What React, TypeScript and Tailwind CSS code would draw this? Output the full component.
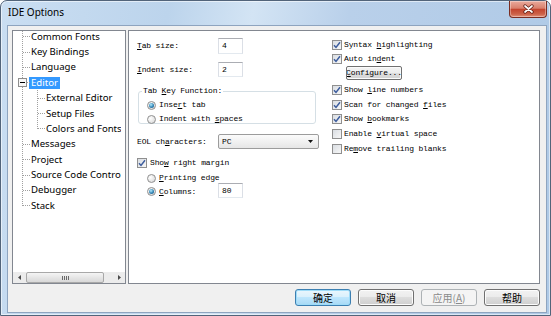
import React from "react";

const MONO = "font-['Liberation_Mono',monospace] text-[8px] leading-[10px] tracking-[-0.15px] text-black whitespace-pre";
const UI = "font-['Noto_Sans',sans-serif]";

function L({ t, u }: { t: string; u: number }) {
  return (
    <span className={`block ${MONO}`}>
      {t.slice(0, u)}
      <span className="underline decoration-1 underline-offset-[1px]">{t[u]}</span>
      {t.slice(u + 1)}
    </span>
  );
}

function Check({ on }: { on: boolean }) {
  return (
    <span className="w-[10px] h-[10px] shrink-0 border border-[#8f8f8f] bg-[linear-gradient(135deg,#d9dde2_0%,#f7f7f7_100%)] flex items-center justify-center">
      {on && (
        <svg width="8" height="8" viewBox="0 0 8 8">
          <path d="M1 4.2 L3 6.4 L7 1.2" stroke="#3d5d9e" strokeWidth="1.5" fill="none" />
        </svg>
      )}
    </span>
  );
}

function Radio({ on }: { on: boolean }) {
  return (
    <span className="w-[9px] h-[9px] shrink-0 rounded-full border border-[#8f8f8f] bg-[radial-gradient(circle_at_35%_35%,#ffffff_0%,#d4d4d4_100%)] flex items-center justify-center">
      {on && (
        <span className="w-[5px] h-[5px] rounded-full bg-[radial-gradient(circle_at_40%_35%,#b5ecff_0%,#3284b4_55%,#1b4f7a_100%)]" />
      )}
    </span>
  );
}

function Input({ v, tall }: { v: string; tall?: boolean }) {
  return (
    <div
      className={
        tall
          ? "w-[25px] h-[16px] shrink-0 border border-[#abadb3] border-b-[#e3e9ef] border-x-[#dbdfe6] bg-white flex items-center pl-[3px]"
          : "w-[25px] h-[15px] shrink-0 border border-[#abadb3] border-b-[#e3e9ef] border-x-[#dbdfe6] bg-white flex items-center pl-[3px]"
      }
    >
      <span className={MONO}>{v}</span>
    </div>
  );
}

const items: { t: string; l: number; sel?: boolean }[] = [
  { t: "Common Fonts", l: 1 },
  { t: "Key Bindings", l: 1 },
  { t: "Language", l: 1 },
  { t: "Editor", l: 1, sel: true },
  { t: "External Editor", l: 2 },
  { t: "Setup Files", l: 2 },
  { t: "Colors and Fonts", l: 2 },
  { t: "Messages", l: 1 },
  { t: "Project", l: 1 },
  { t: "Source Code Control", l: 1 },
  { t: "Debugger", l: 1 },
  { t: "Stack", l: 1 },
];

const RH = 15.38;
const cy = (i: number) => Math.floor(5.69 + RH * i) + 0.5;

function Tree() {
  const l1 = items.map((it, i) => (it.l === 1 ? i : -1)).filter((i) => i >= 0);
  const l2 = items.map((it, i) => (it.l === 2 ? i : -1)).filter((i) => i >= 0);
  return (
    <div className="w-[114px] h-[254px] shrink-0 border border-[#828790] bg-white flex flex-col">
      <div className="relative flex-1 overflow-hidden">
        <svg className="absolute left-0 top-0 pointer-events-none" width="40" height="200" shapeRendering="crispEdges">
          <line x1="9.5" y1="0" x2="9.5" y2={cy(11)} stroke="#a0a0a0" strokeDasharray="1 1" />
          {l1.map((i) => (
            <line key={i} x1="10" y1={cy(i)} x2="17" y2={cy(i)} stroke="#a0a0a0" strokeDasharray="1 1" />
          ))}
          <line x1="24.5" y1={cy(3) + 7} x2="24.5" y2={cy(6)} stroke="#a0a0a0" strokeDasharray="1 1" />
          {l2.map((i) => (
            <line key={i} x1="25" y1={cy(i)} x2="32" y2={cy(i)} stroke="#a0a0a0" strokeDasharray="1 1" />
          ))}
          <rect x="5.5" y={cy(3) - 4} width="8" height="8" fill="#f7f7f7" stroke="#8e8e8e" />
          <line x1="7" y1={cy(3)} x2="12" y2={cy(3)} stroke="#000" />
        </svg>
        <div className="mt-[-2px] w-[108px] overflow-hidden flex flex-col">
          {items.map((it) => (
            <div
              key={it.t}
              className={
                it.l === 1
                  ? "h-[15.38px] flex items-center pl-[18px] whitespace-nowrap"
                  : "h-[15.38px] flex items-center pl-[33px] whitespace-nowrap"
              }
            >
              <span
                className={
                  it.sel
                    ? `${UI} text-[9.6px] leading-[12px] bg-[#3399ff] text-white px-[2px] -ml-[2px]`
                    : `${UI} text-[9.6px] leading-[12px] text-black`
                }
              >
                {it.t}
              </span>
            </div>
          ))}
        </div>
      </div>
      <div className="h-[11px] shrink-0 flex bg-[#ececec]">
        <div className="w-[12px] flex items-center justify-center">
          <svg width="3" height="5" viewBox="0 0 3 5">
            <path d="M3 0 L0 2.5 L3 5 Z" fill="#4a4a4a" />
          </svg>
        </div>
        <div className="flex-1 flex pl-[1px]">
          <div className="w-[78px] rounded-[2px] border border-[#a8a8a8] bg-[linear-gradient(180deg,#f5f5f5_0%,#e6e6e6_50%,#d8d8d8_100%)] flex items-center justify-center">
            <svg width="7" height="4" viewBox="0 0 7 4" shapeRendering="crispEdges">
              <path d="M0.5 0 V4 M2.5 0 V4 M4.5 0 V4 M6.5 0 V4" stroke="#6a6a6a" />
            </svg>
          </div>
        </div>
        <div className="w-[12px] flex items-center justify-center">
          <svg width="3" height="5" viewBox="0 0 3 5">
            <path d="M0 0 L3 2.5 L0 5 Z" fill="#4a4a4a" />
          </svg>
        </div>
      </div>
    </div>
  );
}

function CRow({ on, t, u, cls }: { on: boolean; t: string; u: number; cls: string }) {
  return (
    <div className={cls}>
      <Check on={on} />
      <span className="ml-[2px]">
        <L t={t} u={u} />
      </span>
    </div>
  );
}

function Panel() {
  return (
    <div className="w-[412px] h-[254px] shrink-0 border border-[#828790] bg-white flex pl-[8px]">
      {/* left column */}
      <div className="w-[195px] shrink-0 flex flex-col">
        <div className="mt-[7px] h-[16px] flex items-center">
          <span className="w-[81px] shrink-0">
            <L t="Tab size:" u={0} />
          </span>
          <Input v="4" tall />
        </div>
        <div className="mt-[8px] h-[15px] flex items-center">
          <span className="w-[81px] shrink-0">
            <L t="Indent size:" u={0} />
          </span>
          <Input v="2" />
        </div>
        <div className="mt-[14px] ml-[1px] w-[178px] h-[33px] border border-[#d5dfe5] rounded-[3px] relative flex flex-col pl-[8px]">
          <span className="absolute left-[3px] top-[-6px] bg-white px-[1px] flex">
            <L t="Tab Key Function:" u={4} />
          </span>
          <div className="mt-[8px] h-[10px] flex items-center">
            <Radio on />
            <span className="ml-[3px]">
              <L t="Insert tab" u={4} />
            </span>
          </div>
          <div className="mt-[4px] h-[10px] flex items-center">
            <Radio on={false} />
            <span className="ml-[3px]">
              <L t="Indent with spaces" u={12} />
            </span>
          </div>
        </div>
        <div className="mt-[10px] h-[15px] flex items-center">
          <span className="w-[81px] shrink-0">
            <L t="EOL characters:" u={6} />
          </span>
          <div className="w-[101px] h-[15px] shrink-0 rounded-[2px] border border-[#9c9c9c] bg-[linear-gradient(180deg,#fbfbfb_0%,#f1f1f1_50%,#e6e6e6_100%)] flex items-center pl-[3px] pr-[5px]">
            <span className={MONO}>PC</span>
            <svg className="ml-auto" width="5" height="3" viewBox="0 0 5 3">
              <path d="M0 0 H5 L2.5 3 Z" fill="#111" />
            </svg>
          </div>
        </div>
        <div className="mt-[9px] h-[10px] flex items-center">
          <Check on />
          <span className="ml-[3px]">
            <L t="Show right margin" u={3} />
          </span>
        </div>
        <div className="mt-[5px] h-[10px] flex items-center pl-[10px]">
          <Radio on={false} />
          <span className="ml-[3px]">
            <L t="Printing edge" u={0} />
          </span>
        </div>
        <div className="h-[15px] flex items-center pl-[10px]">
          <div className="w-[71px] shrink-0 flex items-center mt-[2px]">
            <Radio on />
            <span className="ml-[3px]">
              <L t="Columns:" u={0} />
            </span>
          </div>
          <Input v="80" />
        </div>
      </div>
      {/* right column */}
      <div className="flex flex-col">
        <CRow on t="Syntax highlighting" u={7} cls="mt-[9px] h-[10px] flex items-center" />
        <CRow on t="Auto indent" u={7} cls="mt-[4px] h-[10px] flex items-center" />
        <div className="mt-[2px] ml-[14px] w-[56px] h-[14px] rounded-[2px] border border-[#707070] bg-[linear-gradient(180deg,#f4f4f4_0%,#ececec_49%,#dedede_50%,#d2d2d2_100%)] shadow-[inset_0_0_0_1px_#fbfbfb] overflow-hidden flex items-center justify-center">
          <L t="Configure..." u={0} />
        </div>
        <CRow on t="Show line numbers" u={5} cls="mt-[5px] h-[10px] flex items-center" />
        <CRow on t="Scan for changed files" u={17} cls="mt-[5px] h-[10px] flex items-center" />
        <CRow on t="Show bookmarks" u={5} cls="mt-[4px] h-[10px] flex items-center" />
        <CRow on={false} t="Enable virtual space" u={7} cls="mt-[5px] h-[10px] flex items-center" />
        <CRow on={false} t="Remove trailing blanks" u={2} cls="mt-[5px] h-[10px] flex items-center" />
      </div>
    </div>
  );
}

const BTN =
  "w-[56px] h-[17px] rounded-[3px] border flex items-center justify-center font-['Noto_Sans_CJK_SC','Noto_Sans',sans-serif] text-[10px] leading-none";

export default function App() {
  return (
    <div className="w-[551px] h-[316px] overflow-hidden">
      <div className="w-[551px] h-[316px] flex flex-col rounded-t-[7px] border border-[#52647a] bg-[linear-gradient(100deg,#cadef2_0%,#bcd4ec_28%,#d3e4f4_42%,#b9d0ea_58%,#aec9e6_100%)] shadow-[inset_0_0_0_1px_rgba(255,255,255,0.55)]">
        <div className="h-[24px] shrink-0 flex">
          <div className={`${UI} pl-[7px] pb-[2px] flex items-center text-[10px] text-black`}>IDE Options</div>
          <div className="ml-auto mr-[3px] w-[38px] h-[17px] rounded-b-[4px] border border-t-0 border-[#7a2d22] bg-[linear-gradient(180deg,#eaaa9c_0%,#d9806d_45%,#c4452f_52%,#cc6248_82%,#e39079_100%)] shadow-[inset_0_0_0_1px_rgba(255,255,255,0.35)] flex items-center justify-center">
            <svg width="11" height="10" viewBox="0 0 11 10">
              <path d="M2 2 L9 8 M9 2 L2 8" stroke="#5c1a12" strokeWidth="3.2" strokeLinecap="round" />
              <path d="M2 2 L9 8 M9 2 L2 8" stroke="#ffffff" strokeWidth="1.7" strokeLinecap="round" />
            </svg>
          </div>
        </div>
        <div className="flex-1 ml-[6px] mr-[3px] mb-[2px] border border-[#8ea4bf] bg-[#f0f0f0] flex flex-col pl-[4px] pt-[4px] pr-[6px]">
          <div className="flex gap-[2px]">
            <Tree />
            <Panel />
          </div>
          <div className="mt-[5px] flex justify-end gap-[7px]">
            <div className={`${BTN} border-[#3c7fb1] bg-[linear-gradient(180deg,#eaf6fd_0%,#d9f0fc_49%,#bee6fd_50%,#a7d9f5_100%)] shadow-[inset_0_0_0_1px_#9fdcf8] text-black`}>
              确定
            </div>
            <div className={`${BTN} border-[#707070] bg-[linear-gradient(180deg,#f2f2f2_0%,#ebebeb_49%,#dddddd_50%,#cfcfcf_100%)] shadow-[inset_0_0_0_1px_#fcfcfc] text-black`}>
              取消
            </div>
            <div className={`${BTN} border-[#adb2b5] bg-[#f4f4f4] text-[#8a8a8a]`}>
              应用(<span className="underline decoration-1 underline-offset-[1px]">A</span>)
            </div>
            <div className={`${BTN} border-[#707070] bg-[linear-gradient(180deg,#f2f2f2_0%,#ebebeb_49%,#dddddd_50%,#cfcfcf_100%)] shadow-[inset_0_0_0_1px_#fcfcfc] text-black`}>
              帮助
            </div>
          </div>
        </div>
      </div>
    </div>
  );
}
